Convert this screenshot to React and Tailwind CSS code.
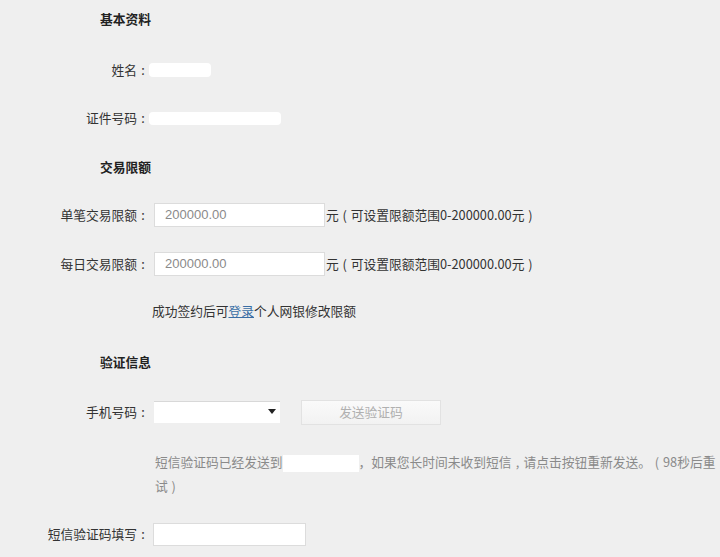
import React from "react";

const font = { fontFamily: '"Noto Sans CJK SC", "Liberation Sans", sans-serif' };

function P({ children }) {
  return <span className="inline-block w-[12px] text-center">{children}</span>;
}

function Label({ children }) {
  return (
    <div className="w-[150px] shrink-0 text-right pr-[1px]">
      {children}
      <P>:</P>
    </div>
  );
}

function Header({ children, className }) {
  return (
    <div className={"h-[24px] flex items-center pl-[100px] font-bold text-[#222] " + className}>
      {children}
    </div>
  );
}

function Range() {
  return (
    <span className="ml-[1px] whitespace-nowrap">
      元<P>(</P>可设置限额范围0-200000.00元<P>)</P>
    </span>
  );
}

export default function App() {
  return (
    <div
      className="w-[720px] h-[557px] bg-[#efefef] text-[12.75px] text-[#333] overflow-hidden flex flex-col"
      style={font}
    >
      <Header className="mt-[7px]">基本资料</Header>

      <div className="mt-[27px] h-[24px] flex items-center">
        <Label>姓名</Label>
        <span className="ml-[-1px] inline-block w-[62px] h-[14px] bg-white rounded-sm"></span>
      </div>

      <div className="mt-[24px] h-[24px] flex items-center">
        <Label>证件号码</Label>
        <span className="ml-[-1px] inline-block w-[132px] h-[13px] bg-white rounded-sm"></span>
      </div>

      <Header className="mt-[25px]">交易限额</Header>

      <div className="mt-[24px] h-[24px] flex items-center">
        <Label>单笔交易限额</Label>
        <div className="ml-[4px] w-[171px] h-[24px] bg-white border border-[#dcdcdc] flex items-center pl-[10px] text-[13px] text-[#8a8a8a]" style={{ fontFamily: '"Liberation Sans", sans-serif' }}>
          200000.00
        </div>
        <Range />
      </div>

      <div className="mt-[25px] h-[24px] flex items-center">
        <Label>每日交易限额</Label>
        <div className="ml-[4px] w-[171px] h-[24px] bg-white border border-[#dcdcdc] flex items-center pl-[10px] text-[13px] text-[#8a8a8a]" style={{ fontFamily: '"Liberation Sans", sans-serif' }}>
          200000.00
        </div>
        <Range />
      </div>

      <div className="mt-[23px] h-[24px] flex items-center pl-[152px]">
        成功签约后可<a className="text-[#3a6ea5] underline">登录</a>个人网银修改限额
      </div>

      <Header className="mt-[27px]">验证信息</Header>

      <div className="mt-[26px] h-[24px] flex items-center">
        <Label>手机号码</Label>
        <div className="ml-[4px] w-[126px] h-[22px] bg-white border-t border-[#d8d8d8] relative">
          <span className="absolute right-[4px] top-[7px] w-0 h-0 border-l-[4px] border-r-[4px] border-t-[5px] border-l-transparent border-r-transparent border-t-[#222]"></span>
        </div>
        <div className="ml-[21px] w-[140px] h-[25px] border border-[#e2e2e2] bg-gradient-to-b from-[#fafafa] to-[#f2f2f2] flex items-center justify-center text-[#b0b0b0]">
          发送验证码
        </div>
      </div>

      <div className="mt-[26px] pl-[155px] leading-[24px] text-[#8a8a8a]">
        短信验证码已经发送到<span className="inline-block align-middle w-[76px] h-[17px] bg-white"></span>，如果您长时间未收到短信<P>,</P>请点击按钮重新发送。<P>(</P>98秒后重试<P>)</P>
      </div>

      <div className="mt-[24px] h-[24px] flex items-center">
        <Label>短信验证码填写</Label>
        <div className="ml-[3px] w-[153px] h-[23px] bg-white border border-[#dcdcdc]"></div>
      </div>
    </div>
  );
}
